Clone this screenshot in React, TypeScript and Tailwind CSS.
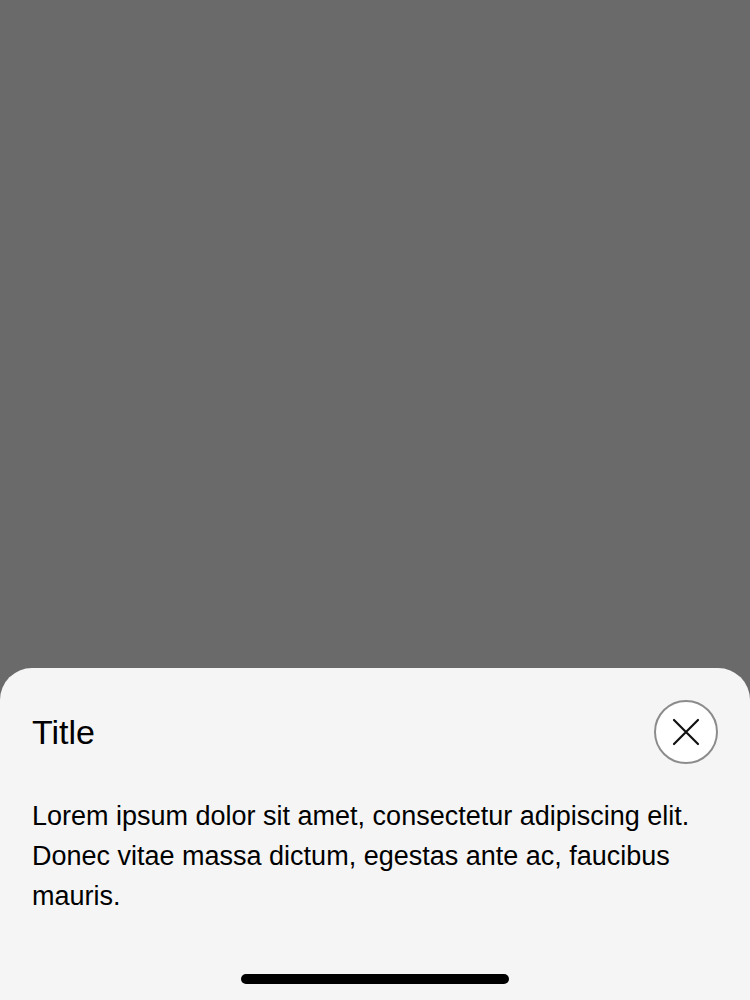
import React from "react";

export default function App() {
  return (
    <div
      className="h-[1000px] w-[750px] flex flex-col bg-[#6a6a6a]"
      style={{ fontFamily: '"Liberation Sans", Arial, sans-serif' }}
    >
      <div className="flex-1" />
      <div className="h-[332px] rounded-t-[32px] bg-[#f5f5f5] px-8 pt-8 flex flex-col">
        <div className="flex items-center justify-between h-16">
          <h1 className="text-[34px] leading-none text-black">Title</h1>
          <button className="w-16 h-16 rounded-full bg-white border-2 border-[#8c8c8c] flex items-center justify-center">
            <svg width="28" height="28" viewBox="0 0 28 28" fill="none" stroke="#111" strokeWidth="2.2" strokeLinecap="round">
              <path d="M2 2L26 26M26 2L2 26" />
            </svg>
          </button>
        </div>
        <p className="mt-8 text-[27px] leading-[40px] text-black">
          Lorem ipsum dolor sit amet, consectetur adipiscing elit. Donec vitae massa dictum, egestas ante ac, faucibus mauris.
        </p>
        <div className="flex-1" />
        <div className="flex justify-center pb-4">
          <div className="w-[268px] h-[10px] rounded-full bg-black" />
        </div>
      </div>
    </div>
  );
}
